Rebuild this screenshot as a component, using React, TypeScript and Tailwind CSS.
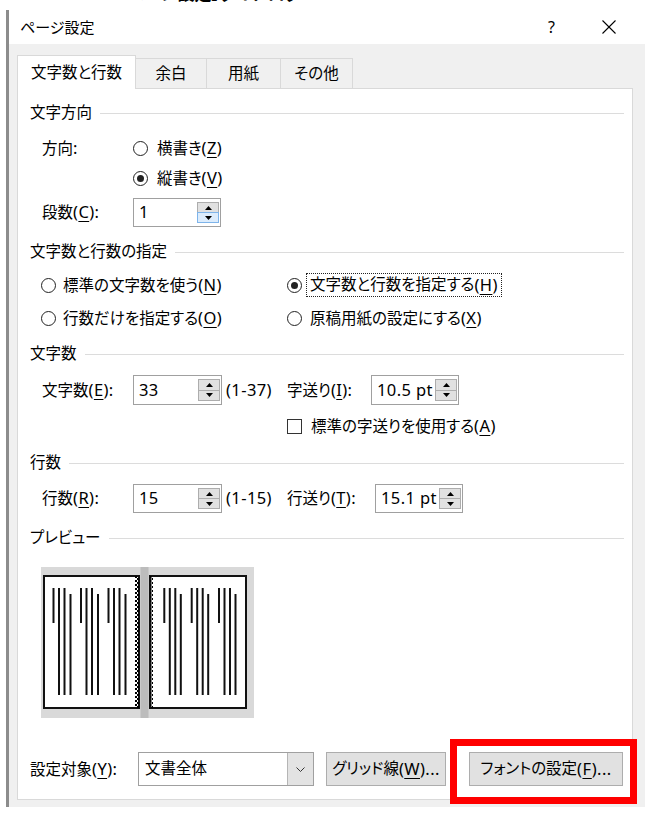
import React from "react";

const U = ({ c }: { c: string }) => (
  <span className="underline underline-offset-[3px] decoration-1">{c}</span>
);

const L = ({ children }: { children: React.ReactNode }) => (
  <span className="text-[16.5px] tracking-[0.4px]">{children}</span>
);

const Radio = ({ checked }: { checked?: boolean }) => (
  <div className="w-[15px] h-[15px] shrink-0 rounded-full border border-[#222] bg-white flex items-center justify-center">
    {checked && <div className="w-[7px] h-[7px] rounded-full bg-[#222]" />}
  </div>
);

const Header = ({ title }: { title: string }) => (
  <div className="flex items-center h-[24px] pl-[12px] pr-[8px]">
    <span>{title}</span>
    <div className="flex-1 h-px bg-[#dcdcdc] ml-[8px]" />
  </div>
);

const Tri = ({ up }: { up?: boolean }) => (
  <svg width="7" height="4" viewBox="0 0 7 4">
    {up ? <polygon points="3.5,0 7,4 0,4" fill="#000" /> : <polygon points="0,0 7,0 3.5,4" fill="#000" />}
  </svg>
);

const Spin = ({ value, w, hot }: { value: string; w: string; hot?: boolean }) => (
  <div className={`flex h-full border border-[#a0a0a0] bg-white ${w}`}>
    <div className="flex-1 flex items-center pl-[5px]">
      <L>{value}</L>
    </div>
    <div className="flex flex-col py-[3px] pr-[1px] w-[23px]">
      <div className="flex-1 bg-[#e1e1e1] border border-[#adadad] flex items-center justify-center">
        <Tri up />
      </div>
      <div
        className={`flex-1 -mt-px border flex items-center justify-center ${
          hot ? "bg-[#dcecfc] border-[#7eb4ea]" : "bg-[#e1e1e1] border-[#adadad]"
        }`}
      >
        <Tri />
      </div>
    </div>
  </div>
);

const Preview = () => {
  const leftGroups = [12.5, 40, 67.5];
  const rightGroups = [123.3, 150.7, 178];
  const lines: React.ReactNode[] = [];
  [...leftGroups, ...rightGroups].forEach((g, gi) => {
    const o = gi < 3 ? [0, 5.5, 11, 17] : [0, 5.5, 11, 16.5];
    lines.push(<line key={`a${gi}`} x1={g + o[0]} y1={21} x2={g + o[0]} y2={56} stroke="#111" strokeWidth={2} />);
    lines.push(<line key={`b${gi}`} x1={g + o[1]} y1={21} x2={g + o[1]} y2={128} stroke="#111" strokeWidth={2} />);
    lines.push(<line key={`c${gi}`} x1={g + o[2]} y1={21} x2={g + o[2]} y2={128} stroke="#111" strokeWidth={2} />);
    lines.push(<line key={`d${gi}`} x1={g + o[3]} y1={27} x2={g + o[3]} y2={128} stroke="#111" strokeWidth={2} />);
  });
  const checks: React.ReactNode[] = [];
  for (let i = 0; i < 66; i++) {
    const y = 9 + i * 2;
    checks.push(<rect key={`l${i}`} x={94 + (i % 2) * 2} y={y} width={2} height={2} fill="#000" />);
    checks.push(<rect key={`r${i}`} x={109 + (i % 2) * 1.5} y={y} width={1.5} height={2} fill="#000" />);
  }
  return (
    <svg width="213" height="151" viewBox="0 0 213 151">
      <rect x="0" y="0" width="213" height="151" fill="#d9d9d9" />
      <rect x="99.5" y="0" width="8" height="151" fill="#bcbcbc" />
      <rect x="3" y="9" width="95" height="132" fill="#fff" stroke="#111" strokeWidth="2" />
      <rect x="109" y="9" width="96" height="132" fill="#fff" stroke="#111" strokeWidth="2" />
      {checks}
      {lines}
    </svg>
  );
};

export default function App() {
  return (
    <div className="relative w-[660px] h-[822px] bg-white overflow-hidden text-black font-['Noto_Sans','Noto_Sans_CJK_JP',sans-serif] [font-feature-settings:'palt'] text-[15.5px] leading-none">
      {/* clipped fragment of text above */}
      <div className="h-[10px] overflow-hidden pl-[128px]">
        <div className="-mt-[15px] font-bold text-[17px] leading-[18px] whitespace-nowrap">
          ページ設定】ダイアログ
        </div>
      </div>

      <div className="ml-[6px] w-[639px] h-[797px] border-l-[3px] border-[#8c8c8c] flex flex-col">
        {/* title bar */}
        <div className="h-[34px] bg-white flex items-center pl-[11px] relative">
          <span className="text-[15px]">ページ設定</span>
          <div className="ml-auto flex items-center">
            <span className="text-[16px] mr-[47px]">?</span>
            <svg width="14" height="14" viewBox="0 0 14 14" className="mr-[29px]">
              <line x1="0.5" y1="0.5" x2="13.5" y2="13.5" stroke="#000" strokeWidth="1.1" />
              <line x1="13.5" y1="0.5" x2="0.5" y2="13.5" stroke="#000" strokeWidth="1.1" />
            </svg>
          </div>
        </div>

        {/* body */}
        <div className="flex-1 bg-[#f0f0f0] pl-[8px] pr-[12px] pt-[11px] pb-[7px] flex flex-col">
          {/* tabs */}
          <div className="flex h-[33px] items-end">
            <div className="relative z-10 -mb-px h-[34px] w-[119px] bg-white border border-b-0 border-[#d9d9d9] flex items-center justify-center">
              文字数と行数
            </div>
            <div className="-ml-px h-[30px] w-[72px] border border-b-0 border-[#d9d9d9] flex items-center justify-center">
              余白
            </div>
            <div className="-ml-px h-[30px] w-[75px] border border-b-0 border-[#d9d9d9] flex items-center justify-center">
              用紙
            </div>
            <div className="-ml-px h-[30px] w-[73px] border border-b-0 border-[#d9d9d9] flex items-center justify-center">
              その他
            </div>
          </div>

          {/* panel */}
          <div className="flex-1 bg-white border border-[#d9d9d9] flex flex-col">
            <div className="mt-[12px]">
              <Header title="文字方向" />
            </div>
            <div className="mt-[10px] h-[26px] flex items-center pl-[24px]">
              <span className="w-[91px]">
                方向<L>:</L>
              </span>
              <Radio />
              <span className="ml-[9px]">
                横書き
                <L>
                  (<U c="Z" />)
                </L>
              </span>
            </div>
            <div className="mt-[4px] h-[26px] flex items-center pl-[24px]">
              <span className="w-[91px]" />
              <Radio checked />
              <span className="ml-[9px]">
                縦書き
                <L>
                  (<U c="V" />)
                </L>
              </span>
            </div>
            <div className="mt-[7px] h-[29px] flex items-center pl-[24px]">
              <span className="w-[91px]">
                段数
                <L>
                  (<U c="C" />):
                </L>
              </span>
              <Spin value="1" w="w-[88px]" hot />
            </div>

            <div className="mt-[13px]">
              <Header title="文字数と行数の指定" />
            </div>
            <div className="mt-[9px] h-[24px] flex items-center pl-[23px]">
              <div className="w-[246px] flex items-center">
                <Radio />
                <span className="ml-[7px]">
                  標準の文字数を使う
                  <L>
                    (<U c="N" />)
                  </L>
                </span>
              </div>
              <Radio checked />
              <span className="ml-[4px] h-[24px] px-[3px] border border-dotted border-[#222] flex items-center">
                文字数と行数を指定する
                <L>
                  (<U c="H" />)
                </L>
              </span>
            </div>
            <div className="mt-[9px] h-[24px] flex items-center pl-[23px]">
              <div className="w-[246px] flex items-center">
                <Radio />
                <span className="ml-[7px]">
                  行数だけを指定する
                  <L>
                    (<U c="O" />)
                  </L>
                </span>
              </div>
              <Radio />
              <span className="ml-[8px]">
                原稿用紙の設定にする
                <L>
                  (<U c="X" />)
                </L>
              </span>
            </div>

            <div className="mt-[12px]">
              <Header title="文字数" />
            </div>
            <div className="mt-[9px] h-[30px] flex items-center pl-[24px]">
              <span className="w-[91px]">
                文字数
                <L>
                  (<U c="E" />):
                </L>
              </span>
              <Spin value="33" w="w-[89px]" />
              <span className="ml-[4px] w-[61px]">
                <L>(1-37)</L>
              </span>
              <span className="w-[84px]">
                字送り
                <L>
                  (<U c="I" />):
                </L>
              </span>
              <Spin value="10.5 pt" w="w-[88px]" />
            </div>
            <div className="mt-[9px] h-[24px] flex items-center pl-[269px]">
              <div className="w-[15px] h-[15px] border border-[#333] bg-white" />
              <span className="ml-[9px]">
                標準の字送りを使用する
                <L>
                  (<U c="A" />)
                </L>
              </span>
            </div>

            <div className="mt-[13px]">
              <Header title="行数" />
            </div>
            <div className="mt-[9px] h-[29px] flex items-center pl-[24px]">
              <span className="w-[91px]">
                行数
                <L>
                  (<U c="R" />):
                </L>
              </span>
              <Spin value="15" w="w-[89px]" />
              <span className="ml-[4px] w-[61px]">
                <L>(1-15)</L>
              </span>
              <span className="w-[88px]">
                行送り
                <L>
                  (<U c="T" />):
                </L>
              </span>
              <Spin value="15.1 pt" w="w-[88px]" />
            </div>

            <div className="mt-[13px]">
              <Header title="プレビュー" />
            </div>
            <div className="mt-[17px] h-[151px] pl-[23px]">
              <Preview />
            </div>

            <div className="mt-[34px] h-[34px] flex items-center pl-[12px]">
              <span className="w-[108px]">
                設定対象
                <L>
                  (<U c="Y" />):
                </L>
              </span>
              <div className="w-[176px] h-full border border-[#a0a0a0] bg-white flex">
                <div className="flex-1 flex items-center pl-[6px]">文書全体</div>
                <div className="w-[26px] bg-[#e3e3e3] border-l border-[#b5b5b5] flex items-center justify-center">
                  <svg width="9" height="5" viewBox="0 0 9 5">
                    <polyline points="0.5,0.5 4.5,4.5 8.5,0.5" fill="none" stroke="#333" strokeWidth="1" />
                  </svg>
                </div>
              </div>
              <div className="ml-[12px] w-[120px] h-full bg-[#e1e1e1] border border-[#adadad] flex items-center justify-center">
                グリッド線
                <L>
                  (<U c="W" />)...
                </L>
              </div>
              <div className="ml-[23px] w-[154px] h-full bg-[#e1e1e1] border border-[#adadad] flex items-center justify-center">
                フォントの設定
                <L>
                  (<U c="F" />)...
                </L>
              </div>
            </div>
          </div>
        </div>
      </div>

      {/* red highlight annotation */}
      <div className="absolute left-[450px] top-[739px] w-[187px] h-[65px] border-[7px] border-[#ff0000]" />
    </div>
  );
}
